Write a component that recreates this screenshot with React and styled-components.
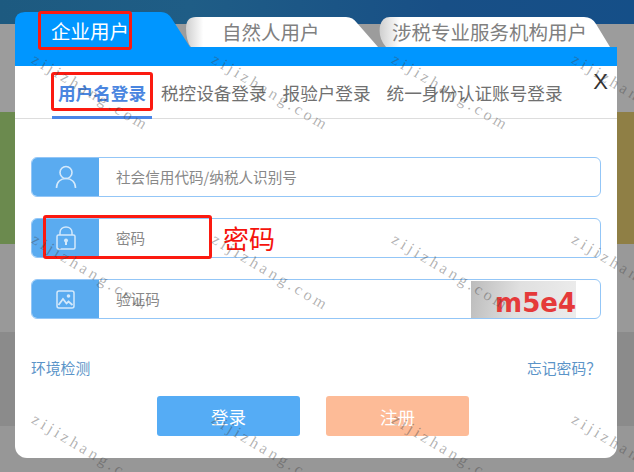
import React from "react";
import styled, { createGlobalStyle } from "styled-components";

const Global = createGlobalStyle`
  html, body { margin: 0; padding: 0; background: #999; }
  body { font-family: "Noto Sans CJK SC", "Liberation Sans", sans-serif; }
  * { box-sizing: border-box; }
`;

const Page = styled.div`
  position: relative;
  width: 634px;
  height: 472px;
  overflow: hidden;
`;

const Band = styled.div`
  height: ${({ $h }) => $h}px;
  background: ${({ $bg }) => $bg};
  display: flex;
  justify-content: space-between;
`;

const Side = styled.div`
  width: 30px;
  background: ${({ $bg }) => $bg};
`;

const Modal = styled.div`
  position: absolute;
  left: 15px;
  top: 12px;
  width: 602px;
`;

const Tabs = styled.div`
  display: flex;
  height: 35px;
  align-items: flex-end;
`;

const TabShape = styled.svg`
  position: absolute;
  left: 0;
  bottom: 0;
`;

const Tab = styled.div`
  position: relative;
  flex: none;
  width: ${({ $w }) => $w}px;
  height: ${({ $active }) => ($active ? 35 : 31)}px;
  margin-left: ${({ $ml }) => $ml || 0}px;
  padding-left: ${({ $pad }) => $pad}px;
  padding-top: ${({ $active }) => ($active ? 3 : 0)}px;
  font-size: 19.5px;
  line-height: 31px;
  white-space: nowrap;
  color: ${({ $active }) => ($active ? "#fff" : "#808080")};
`;

const TabLabel = styled.span`
  position: relative;
`;

const Panel = styled.div`
  background: #fff;
  height: 411px;
  border-radius: 0 0 12px 12px;
  border-top: 19px solid #0096ff;
  display: flex;
  flex-direction: column;
`;

const LoginNav = styled.div`
  height: 53px;
  margin-top: 0;
  border-bottom: 1px solid #ddd;
  display: flex;
  padding-left: 37px;
  position: relative;
`;

const NavItem = styled.div`
  padding: 0 ${({ $pad }) => $pad ?? 0}px;
  margin-right: ${({ $mr }) => $mr ?? 16}px;
  height: 53px;
  line-height: 54px;
  font-size: 17.6px;
  white-space: nowrap;
  font-weight: ${({ $active }) => ($active ? 700 : 400)};
  color: ${({ $active }) => ($active ? "#4a86e0" : "#707070")};
  border-bottom: ${({ $active }) => ($active ? "3px solid #4a86e8" : "none")};
`;

const Close = styled.div`
  position: absolute;
  right: 9px;
  top: 3px;
  font-family: "Liberation Sans", sans-serif;
  font-size: 22px;
  line-height: 26px;
  color: #333;
`;

const Form = styled.div`
  display: flex;
  flex-direction: column;
  gap: 21px;
  padding: 38px 16px 0;
`;

const Field = styled.div`
  position: relative;
  height: 40px;
  display: flex;
  border: 1px solid #93c6f7;
  border-radius: 6px;
  overflow: hidden;
`;

const IconCell = styled.div`
  flex: none;
  width: 67px;
  background: #5aabf0;
  display: flex;
  align-items: center;
  justify-content: center;
`;

const Placeholder = styled.div`
  padding-left: 17px;
  font-size: 14.6px;
  line-height: 37px;
  color: #888;
`;

const Captcha = styled.div`
  position: absolute;
  right: 24px;
  top: 1px;
  width: 105px;
  height: 37px;
  padding-top: 5px;
  padding-right: 0;
  text-align: right;
  background: linear-gradient(100deg, #bcbcbc 0%, #e0e0e0 45%, #ececec 100%);
  font-family: "DejaVu Sans", sans-serif;
  font-size: 26px;
  line-height: 34px;
  font-weight: 700;
  color: #e53a3a;
`;

const Links = styled.div`
  display: flex;
  justify-content: space-between;
  padding: 38px 16px 0;
  font-size: 14.8px;
  line-height: 22px;
  color: #5b94c8;
`;

const Buttons = styled.div`
  display: flex;
  justify-content: center;
  gap: 26px;
  margin-top: 17px;
  padding-right: 6px;
`;

const Button = styled.div`
  width: 143px;
  height: 40px;
  border-radius: 3px;
  background: ${({ $bg }) => $bg};
  color: #fff;
  font-size: 17.5px;
  line-height: 42px;
  text-align: center;
`;

const RedBox = styled.div`
  position: absolute;
  left: ${({ $x }) => $x}px;
  top: ${({ $y }) => $y}px;
  width: ${({ $w }) => $w}px;
  height: ${({ $h }) => $h}px;
  border: 3px solid #fb1a10;
  border-radius: 3px;
`;

const RedNote = styled.div`
  position: absolute;
  left: 223px;
  top: 220px;
  font-size: 26px;
  line-height: 36px;
  color: #f5130c;
`;

const Mark = styled.div`
  position: absolute;
  left: ${({ $x }) => $x}px;
  top: ${({ $y }) => $y}px;
  font-family: "Liberation Serif", serif;
  font-size: 16px;
  line-height: 18px;
  letter-spacing: 3.4px;
  color: rgba(70, 70, 70, 0.42);
  transform: rotate(31deg);
  transform-origin: 0 50%;
  white-space: nowrap;
  pointer-events: none;
`;

const UserIcon = () => (
  <svg width="22" height="24" viewBox="0 0 22 24" fill="none" stroke="#d4e9fb" strokeWidth="1.6">
    <circle cx="11" cy="7.5" r="6" />
    <path d="M1.5 23c0-6 4-9.5 9.500-9.500S20.500 17 20.500 23" />
  </svg>
);

const LockIcon = () => (
  <svg width="20" height="24" viewBox="0 0 20 24" fill="none" stroke="#d4e9fb" strokeWidth="1.5">
    <rect x="1" y="9" width="18" height="14" rx="1.500" />
    <path d="M4 9V6.500C4 3.200 6.500 1 10 1s6 2.200 6 5.500V9" />
    <circle cx="10" cy="14.500" r="2" fill="#d4e9fb" stroke="none" />
    <path d="M10 15v4" strokeWidth="2" />
  </svg>
);

const ImageIcon = () => (
  <svg width="19" height="19" viewBox="0 0 19 19" fill="none" stroke="#d4e9fb" strokeWidth="1.5">
    <rect x="1" y="1" width="17" height="17" rx="2" />
    <circle cx="12.500" cy="6" r="1.800" fill="#d4e9fb" stroke="none" />
    <path d="M2.500 15l4.500-6 3.500 4.500 2-2 4 3.500" strokeWidth="1.800" />
  </svg>
);

const marks = [];
[49, 229, 409].forEach((y) => {
  [33, 213, 393, 573].forEach((x) => marks.push({ x, y }));
});

export default function App() {
  return (
    <Page>
      <Global />
      <Band $h={24} $bg="linear-gradient(90deg, #1d5a80 0%, #1f5d86 30%, #184f86 70%, #154f88 100%)" />
      <Band $h={88} $bg="#9c9c9c" />
      <Band $h={132} $bg="#9c9c9c">
        <Side $bg="#6b8a4e" />
        <Side $bg="#8f7f45" />
      </Band>
      <Band $h={88} $bg="#999" />
      <Band $h={94} $bg="#8b8b8b" />
      <Band $h={46} $bg="#979797" />

      <Modal>
        <Tabs>
          <Tab $active $w={175} $pad={36}>
            <TabShape width="175" height="35" viewBox="0 0 175 35">
              <path d="M0 35V10Q0 0 10 0H146Q153 0 157 7L175 35Z" fill="#0096ff" />
            </TabShape>
            <TabLabel>企业用户</TabLabel>
          </Tab>
          <Tab $w={192} $ml={-4} $pad={36}>
            <TabShape width="192" height="31" viewBox="0 0 192 31">
              <defs>
                <linearGradient id="tabShade" x1="0" x2="1" y1="0" y2="0">
                  <stop offset="0" stopColor="#cfcfcf" />
                  <stop offset="0.09" stopColor="#fff" />
                </linearGradient>
              </defs>
              <path d="M5 31Q0 25 0 12Q0 1 10 1H160Q167 1 171 7L192 31Z" fill="url(#tabShade)" />
            </TabShape>
            <TabLabel>自然人用户</TabLabel>
          </Tab>
          <Tab $w={232} $ml={0} $pad={14}>
            <TabShape width="232" height="31" viewBox="0 0 232 31">
              <path d="M8 31Q0 22 2 10Q4 1 12 1H206Q214 1 218 8L232 31Z" fill="url(#tabShade)" />
            </TabShape>
            <TabLabel>涉税专业服务机构用户</TabLabel>
          </Tab>
        </Tabs>
        <Panel>
          <LoginNav>
            <NavItem $active $pad={6} $mr={9}>用户名登录</NavItem>
            <NavItem>税控设备登录</NavItem>
            <NavItem>报验户登录</NavItem>
            <NavItem>统一身份认证账号登录</NavItem>
            <Close>X</Close>
          </LoginNav>
          <Form>
            <Field>
              <IconCell><UserIcon /></IconCell>
              <Placeholder>社会信用代码/纳税人识别号</Placeholder>
            </Field>
            <Field>
              <IconCell><LockIcon /></IconCell>
              <Placeholder>密码</Placeholder>
            </Field>
            <Field>
              <IconCell><ImageIcon /></IconCell>
              <Placeholder>验证码</Placeholder>
              <Captcha>m5e4</Captcha>
            </Field>
          </Form>
          <Links>
            <span>环境检测</span>
            <span>忘记密码？</span>
          </Links>
          <Buttons>
            <Button $bg="#55acf5">登录</Button>
            <Button $bg="#fdbb97">注册</Button>
          </Buttons>
        </Panel>
      </Modal>

      <RedBox $x={38} $y={11} $w={94} $h={39} />
      <RedBox $x={51} $y={72} $w={102} $h={39} />
      <RedBox $x={43} $y={215} $w={169} $h={44} />
      <RedNote>密码</RedNote>

      {marks.map((m) => (
        <Mark key={`${m.x}-${m.y}`} $x={m.x} $y={m.y}>zijizhang.com</Mark>
      ))}
    </Page>
  );
}
